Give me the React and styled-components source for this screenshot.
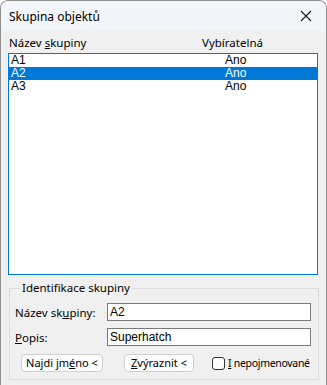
import React, { useState } from 'react';
import styled, { createGlobalStyle } from 'styled-components';

const GlobalStyle = createGlobalStyle`
  html, body {
    margin: 0;
    padding: 0;
    background: #ffffff;
  }
  * {
    box-sizing: border-box;
  }
`;

const uiFont = `"Segoe UI", "Noto Sans", "Liberation Sans", sans-serif`;
const listFont = `"Liberation Sans", Arial, sans-serif`;

const Window = styled.div`
  width: 327px;
  height: 385px;
  border: 1px solid #8f8f8f;
  border-bottom: none;
  border-radius: 8px 8px 0 0;
  overflow: hidden;
  display: flex;
  flex-direction: column;
  background: #f0f0f0;
  font-family: ${uiFont};
  font-size: 11.5px;
  color: #000;
`;

const TitleBar = styled.div`
  height: 30px;
  flex: none;
  display: flex;
  align-items: center;
  justify-content: space-between;
  padding: 0 6px 0 8px;
  background: #f2f5fa;
`;

const Title = styled.span`
  font-size: 12px;
`;

const CloseButton = styled.button`
  width: 28px;
  height: 26px;
  border: none;
  background: transparent;
  display: flex;
  align-items: center;
  justify-content: center;
  padding: 0;
`;

const Body = styled.div`
  flex: 1;
  display: flex;
  flex-direction: column;
  padding: 1px 8px 0 7px;
`;

const HeaderRow = styled.div`
  display: grid;
  grid-template-columns: 193px 1fr;
  height: 21px;
  align-items: center;
  padding-left: 1px;
`;

const List = styled.div`
  height: 222px;
  border: 1px solid #0078d7;
  background: #ffffff;
  font-family: ${listFont};
  font-size: 12px;
`;

const Row = styled.div`
  display: grid;
  grid-template-columns: 214px 1fr;
  height: 13px;
  line-height: 13px;
  padding-left: 2px;
  background: ${(p) => (p.selected ? '#0078d7' : 'transparent')};
  color: ${(p) => (p.selected ? '#ffffff' : '#000000')};
`;

const Group = styled.fieldset`
  margin: 6px 0 0 1px;
  padding: 8px 7px 5px 5px;
  border: 1px solid #dcdcdc;
  height: 99px;
  display: flex;
  flex-direction: column;
  gap: 7px;
`;

const Legend = styled.legend`
  padding: 0 2px;
  margin-left: 5px;
  line-height: 14px;
`;

const FieldRow = styled.div`
  display: flex;
  align-items: center;
  height: 18px;
`;

const FieldLabel = styled.label`
  width: 92px;
  flex: none;
  white-space: nowrap;
`;

const TextInput = styled.input`
  width: 204px;
  height: 18px;
  border: 1px solid #7a7a7a;
  padding: 0 2px;
  font-family: ${listFont};
  font-size: 12px;
  color: #000;
  background: #fff;
  outline: none;
`;

const ButtonRow = styled.div`
  display: flex;
  align-items: center;
  height: 18px;
  margin-top: 1px;
  padding-left: 6px;
`;

const Button = styled.button`
  flex: none;
  width: ${(p) => p.w}px;
  height: 18px;
  margin-right: ${(p) => p.gap || 0}px;
  background: #fdfdfd;
  border: 1px solid #d0d0d0;
  border-radius: 4px;
  font-family: ${uiFont};
  font-size: 11px;
  color: #000;
  padding: 0;
  line-height: 16px;
  white-space: nowrap;
`;

const CheckLabel = styled.label`
  display: flex;
  align-items: center;
  gap: 3px;
  white-space: nowrap;
  font-size: 10.5px;
  letter-spacing: -0.3px;
`;

const CheckBox = styled.span`
  flex: none;
  width: 13px;
  height: 13px;
  border: 1px solid #333;
  border-radius: 3px;
  background: #fff;
  display: inline-block;
`;

const U = styled.span`
  text-decoration: underline;
  text-underline-offset: 1px;
`;

const groups = [
  { name: 'A1', selectable: 'Ano' },
  { name: 'A2', selectable: 'Ano' },
  { name: 'A3', selectable: 'Ano' },
];

const App = () => {
  const [selected, setSelected] = useState(1);
  const [name, setName] = useState('A2');
  const [desc, setDesc] = useState('Superhatch');

  return (
    <>
      <GlobalStyle />
      <Window>
        <TitleBar>
          <Title>Skupina objektů</Title>
          <CloseButton aria-label="Zavřít">
            <svg width="12" height="12" viewBox="0 0 12 12">
              <path d="M1 1 L11 11 M11 1 L1 11" stroke="#1a1a1a" strokeWidth="1.1" />
            </svg>
          </CloseButton>
        </TitleBar>
        <Body>
          <HeaderRow>
            <span>Název <U>s</U>kupiny</span>
            <span>Vybíratelná</span>
          </HeaderRow>
          <List>
            {groups.map((g, i) => (
              <Row key={g.name} selected={i === selected} onClick={() => setSelected(i)}>
                <span>{g.name}</span>
                <span>{g.selectable}</span>
              </Row>
            ))}
          </List>
          <Group>
            <Legend>Identifikace skupiny</Legend>
            <FieldRow>
              <FieldLabel>Název sk<U>u</U>piny:</FieldLabel>
              <TextInput value={name} onChange={(e) => setName(e.target.value)} />
            </FieldRow>
            <FieldRow>
              <FieldLabel><U>P</U>opis:</FieldLabel>
              <TextInput value={desc} onChange={(e) => setDesc(e.target.value)} />
            </FieldRow>
            <ButtonRow>
              <Button w={82} gap={21}>Najdi jm<U>é</U>no &lt;</Button>
              <Button w={70} gap={18}><U>Z</U>výraznit &lt;</Button>
              <CheckLabel>
                <CheckBox />
                <span><U>I</U> nepojmenované</span>
              </CheckLabel>
            </ButtonRow>
          </Group>
        </Body>
      </Window>
    </>
  );
};

export default App;
